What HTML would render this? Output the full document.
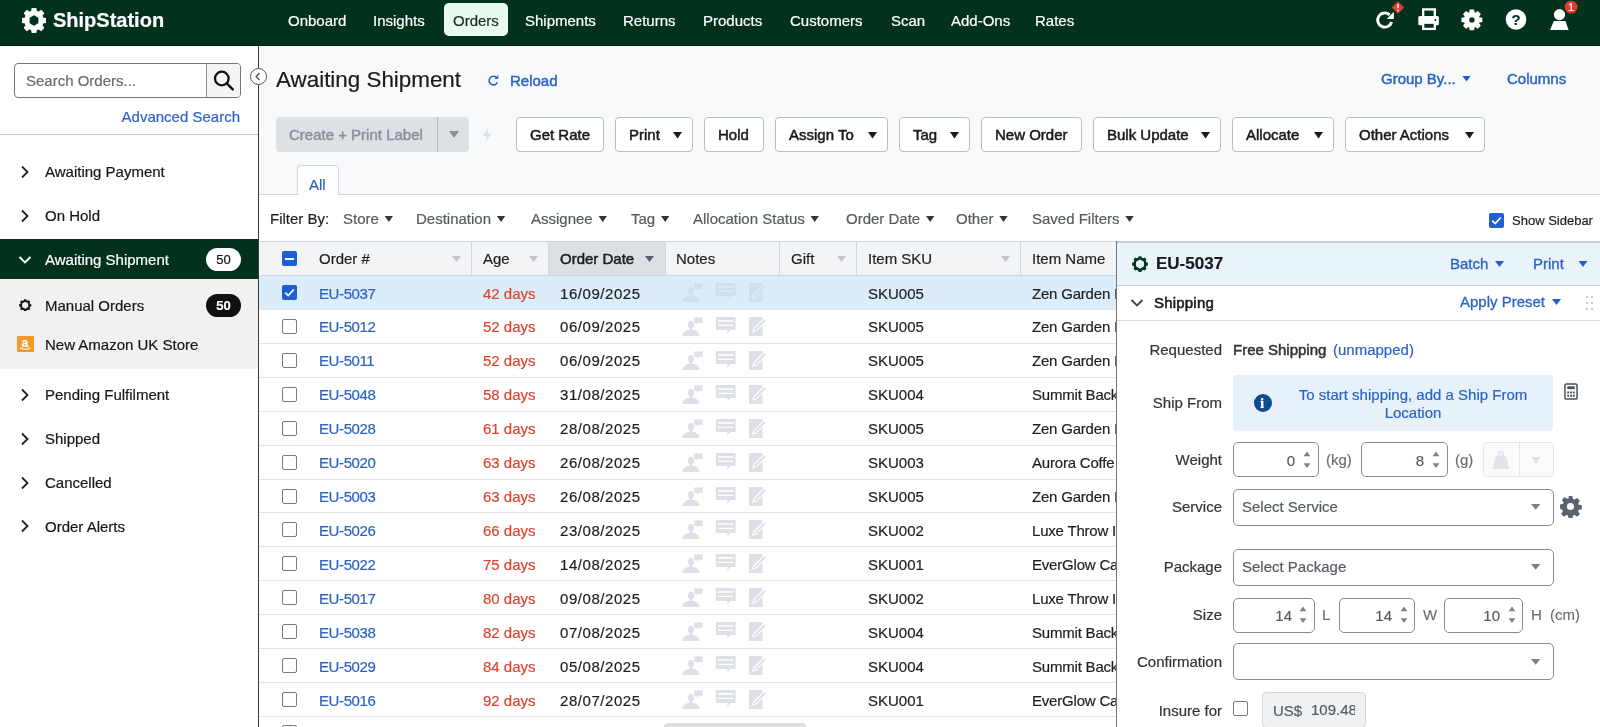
<!DOCTYPE html>
<html><head><meta charset="utf-8">
<style>
*{box-sizing:border-box;margin:0;padding:0}
html,body{width:1600px;height:727px;overflow:hidden;background:#f8f9fb;font-family:"Liberation Sans",sans-serif;color:#1a1a1a}
.abs{position:absolute}
.t{position:absolute;white-space:nowrap;line-height:1}
/* NAV */
#nav{z-index:5;position:absolute;left:0;top:0;width:1600px;height:46px;background:#02311d;border-bottom:1px solid #011a0e}
#nav .ni{position:absolute;top:11.500px;color:#fff;font-size:15px;white-space:nowrap;line-height:18px}
#nav .act{position:absolute;left:444px;top:3px;width:64px;height:33px;background:#e7faee;border-radius:5px}
/* SIDEBAR */
#side{position:absolute;left:0;top:45px;width:259px;height:682px;background:#fff;border-right:1px solid #3a3a3a}
.si{position:absolute;left:45px;font-size:15px;color:#171717;white-space:nowrap;line-height:18px}
.chev{position:absolute;left:19px;width:12px;height:14px}
/* MAIN */
.btn{-webkit-text-stroke:0.500px #1a1a1a;position:absolute;top:117px;height:35px;border:1px solid #b9bfc7;border-radius:4px;background:#fff;font-size:15px;font-weight:normal;color:#1a1a1a;line-height:34px;white-space:nowrap;padding-left:13px}
.btn i{position:absolute;right:10px;top:14px;width:9px;height:6.5px;background:#1a1a1a;clip-path:polygon(0 0,100% 0,50% 100%)}
.flt{position:absolute;top:210px;font-size:15px;color:#555b63;white-space:nowrap;line-height:18px}
.flt i{display:inline-block;margin-left:5.500px;vertical-align:2px;width:9px;height:6.5px;background:#30363e;clip-path:polygon(0 0,100% 0,50% 100%)}
.gh{font-size:15px;line-height:18px;color:#1f1f1f}
.gc{font-size:15px;line-height:18px;color:#1f1f1f}
.pb{-webkit-text-stroke:0.300px #2c63c4;font-size:15px;line-height:18px;color:#2c63c4}
.pl{margin-right:-1px;font-size:15px;line-height:18px;color:#333}
.pu{font-size:15px;line-height:18px;color:#6a7078}
.pv{font-size:15px;line-height:18px;color:#555b63}
.ps{font-size:15px;line-height:18px;color:#555b63}
.inp{position:absolute;border:1px solid #868c94;border-radius:5px;background:#fff}
.gd{letter-spacing:0.550px}
.go{letter-spacing:-0.400px}
.gn{letter-spacing:-0.200px}
body{will-change:transform;-webkit-text-stroke-width:0.200px}
</style></head><body>
<div id="nav">
  <div class="act"></div>
  <div class="ni" style="left:288px">Onboard</div>
  <div class="ni" style="left:373px">Insights</div>
  <div class="ni" style="left:453px;color:#1f2a25">Orders</div>
  <div class="ni" style="left:525px">Shipments</div>
  <div class="ni" style="left:623px">Returns</div>
  <div class="ni" style="left:703px">Products</div>
  <div class="ni" style="left:790px">Customers</div>
  <div class="ni" style="left:891px">Scan</div>
  <div class="ni" style="left:951px">Add-Ons</div>
  <div class="ni" style="left:1035px">Rates</div>
  <svg class="abs" style="left:1370px;top:0" width="230" height="45" viewBox="1370 0 230 45">
    <path d="M1391.600 22 A7.100 7.100 0 1 1 1389.700 14.900" fill="none" stroke="#fff" stroke-width="2.900"/>
    <path d="M1393.900 11.800 L1393.900 18.900 L1386.800 18.900 Z" fill="#fff"/>
    <path d="M1398 1.300 L1404.200 7.500 L1398 13.700 L1391.800 7.500 Z" fill="#e63b2e"/>
    <path d="M1398 4 L1398 8.300 M1398 9.800 L1398 11.200" stroke="#fff" stroke-width="1.500"/>
    <rect x="1423.200" y="9.400" width="11.600" height="8" fill="none" stroke="#fff" stroke-width="2.300"/>
    <rect x="1418.300" y="16" width="20.600" height="9.200" rx="1.500" fill="#fff"/>
    <rect x="1423.200" y="22.700" width="11.600" height="6.200" fill="#02311d" stroke="#fff" stroke-width="2.300"/>
    <circle cx="1435.300" cy="20" r="1" fill="#02311d"/>
    <g transform="translate(1471.900 19.900)"><path d="M7.11 -2.06 L9.84 -1.80 L9.84 1.80 L7.11 2.06 L6.48 3.56 L8.23 5.69 L5.69 8.23 L3.56 6.48 L2.06 7.11 L1.80 9.84 L-1.80 9.84 L-2.06 7.11 L-3.56 6.48 L-5.69 8.23 L-8.23 5.69 L-6.48 3.56 L-7.11 2.06 L-9.84 1.80 L-9.84 -1.80 L-7.11 -2.06 L-6.48 -3.56 L-8.23 -5.69 L-5.69 -8.23 L-3.56 -6.48 L-2.06 -7.11 L-1.80 -9.84 L1.80 -9.84 L2.06 -7.11 L3.56 -6.48 L5.69 -8.23 L8.23 -5.69 L6.48 -3.56Z" fill="#fff" stroke="#fff" stroke-width="1.200" stroke-linejoin="round"/><circle r="2.700" fill="#02311d"/></g>
    <circle cx="1516" cy="19.500" r="10.300" fill="#fff"/>
    <circle cx="1559.500" cy="14.600" r="5.600" fill="#fff"/>
    <path d="M1553.800 21 L1565.500 21 L1568.600 30 L1550 30 Z" fill="#fff"/>
    <circle cx="1571.100" cy="7.100" r="6.400" fill="#e63b2e"/>
  </svg>
  <div class="t" style="left:1511.500px;top:11px;font-size:15px;font-weight:bold;color:#02311d;line-height:18px">?</div>
  <div class="t" style="left:1568px;top:1px;font-size:11px;color:#fff;line-height:12px">1</div>

  <svg class="abs" style="left:22px;top:7.500px" width="24" height="25" viewBox="0 0 24 24" preserveAspectRatio="none"><path fill="#fff" fill-rule="evenodd" stroke="#fff" stroke-width="1" stroke-linejoin="round" d="M20.89 9.64 L23.85 10.12 L23.85 13.88 L20.89 14.36 L19.96 16.62 L21.71 19.05 L19.05 21.71 L16.62 19.96 L14.36 20.89 L13.88 23.85 L10.12 23.85 L9.64 20.89 L7.38 19.96 L4.95 21.71 L2.29 19.05 L4.04 16.62 L3.11 14.36 L0.15 13.88 L0.15 10.12 L3.11 9.64 L4.04 7.38 L2.29 4.95 L4.95 2.29 L7.38 4.04 L9.64 3.11 L10.12 0.15 L13.88 0.15 L14.36 3.11 L16.62 4.04 L19.05 2.29 L21.71 4.95 L19.96 7.38ZM16.94 14.85 L12.00 17.70 L7.06 14.85 L7.06 9.15 L12.00 6.30 L16.94 9.15Z"/></svg>
  <div class="t" id="brand" style="left:53px;top:8px;font-size:20px;font-weight:bold;color:#fff;line-height:24px">ShipStation</div>
</div>
<div id="side">
  <div class="abs" style="left:14px;top:18px;width:227px;height:35px;border:1px solid #6f757d;border-radius:4px;background:#fff;overflow:hidden">
    <div class="t" style="left:11px;top:8px;font-size:15px;color:#666b72;line-height:18px">Search Orders...</div>
    <div class="abs" style="left:191px;top:0;width:35px;height:33px;background:#f3f4f6;border-left:1px solid #8b9097"></div>
    <svg class="abs" style="left:197px;top:4.500px" width="24" height="24" viewBox="0 0 24 24"><circle cx="9.800" cy="9.500" r="6.800" fill="none" stroke="#111" stroke-width="2.300"/><path d="M14.700 14.400 L20.800 20.300" stroke="#111" stroke-width="2.500" stroke-linecap="round"/></svg>
  </div>
  <div class="t" style="right:18px;top:63px;font-size:15px;color:#2c63c4;line-height:18px">Advanced Search</div>
  <div class="abs" style="left:0;top:89px;width:258px;height:1px;background:#c5c9cf"></div>

  <svg class="chev" style="top:120px" viewBox="0 0 12 14"><path d="M3 1.5 L8.5 7 L3 12.5" fill="none" stroke="#222" stroke-width="1.8"/></svg>
  <div class="si" style="top:118px">Awaiting Payment</div>
  <svg class="chev" style="top:164px" viewBox="0 0 12 14"><path d="M3 1.5 L8.5 7 L3 12.5" fill="none" stroke="#222" stroke-width="1.8"/></svg>
  <div class="si" style="top:162px">On Hold</div>

  <div class="abs" style="left:0;top:194px;width:258px;height:40px;background:#02311d"></div>
  <svg class="abs" style="left:18px;top:209px" width="14" height="12" viewBox="0 0 14 12"><path d="M1.5 3 L7 8.5 L12.5 3" fill="none" stroke="#fff" stroke-width="1.8"/></svg>
  <div class="si" style="top:206px;color:#fff">Awaiting Shipment</div>
  <div class="abs" style="left:206px;top:203px;width:35px;height:23px;border-radius:12px;background:#fff;color:#1a1a1a;font-size:13px;line-height:23px;text-align:center">50</div>

  <div class="abs" style="left:0;top:234px;width:258px;height:90px;background:#f0f1f3"></div>
  <svg class="abs" style="left:19.200px;top:253.700px" width="12.400" height="12.600" viewBox="0 0 24 24"><path fill="#141a17" fill-rule="evenodd" d="M21.62 9.29 L23.84 10.03 L23.84 13.97 L21.62 14.71 L20.72 16.89 L21.76 18.98 L18.98 21.76 L16.89 20.72 L14.71 21.62 L13.97 23.84 L10.03 23.84 L9.29 21.62 L7.11 20.72 L5.02 21.76 L2.24 18.98 L3.28 16.89 L2.38 14.71 L0.16 13.97 L0.16 10.03 L2.38 9.29 L3.28 7.11 L2.24 5.02 L5.02 2.24 L7.11 3.28 L9.29 2.38 L10.03 0.16 L13.97 0.16 L14.71 2.38 L16.89 3.28 L18.98 2.24 L21.76 5.02 L20.72 7.11ZM17.89 15.40 L12.00 18.80 L6.11 15.40 L6.11 8.60 L12.00 5.20 L17.89 8.60Z"/></svg>
  <div class="si" style="top:252px">Manual Orders</div>
  <div class="abs" style="left:206px;top:249px;width:35px;height:23px;border-radius:12px;background:#111;color:#fff;font-size:13px;font-weight:bold;line-height:23px;text-align:center">50</div>
  <div class="abs" style="left:17px;top:291px;width:16.500px;height:16px;background:#f3982a;border-radius:1px"></div>
  <div class="t" style="left:21.500px;top:290.500px;font-size:12px;font-weight:bold;color:#fff;line-height:14px">a</div>
  <svg class="abs" style="left:19px;top:302px" width="13" height="4" viewBox="0 0 13 4"><path d="M1 0.800 Q6 3.800 11.500 0.800" fill="none" stroke="#fff" stroke-width="1.100"/></svg>
  <div class="si" style="top:291px">New Amazon UK Store</div>

  <svg class="chev" style="top:343px" viewBox="0 0 12 14"><path d="M3 1.5 L8.5 7 L3 12.5" fill="none" stroke="#222" stroke-width="1.8"/></svg>
  <div class="si" style="top:341px">Pending Fulfilment</div>
  <svg class="chev" style="top:387px" viewBox="0 0 12 14"><path d="M3 1.5 L8.5 7 L3 12.5" fill="none" stroke="#222" stroke-width="1.8"/></svg>
  <div class="si" style="top:385px">Shipped</div>
  <svg class="chev" style="top:431px" viewBox="0 0 12 14"><path d="M3 1.5 L8.5 7 L3 12.5" fill="none" stroke="#222" stroke-width="1.8"/></svg>
  <div class="si" style="top:429px">Cancelled</div>
  <svg class="chev" style="top:474px" viewBox="0 0 12 14"><path d="M3 1.5 L8.5 7 L3 12.5" fill="none" stroke="#222" stroke-width="1.8"/></svg>
  <div class="si" style="top:473px">Order Alerts</div>
</div>
<div id="main">
  <!-- collapse circle -->
  <div class="abs" style="left:249.500px;top:68px;width:17px;height:17px;border-radius:50%;background:#fff;border:1px solid #555"></div>
  <svg class="abs" style="left:254px;top:72px" width="8" height="9" viewBox="0 0 8 9"><path d="M5.5 1 L2 4.500 L5.500 8" fill="none" stroke="#444" stroke-width="1.100"/></svg>
  <div class="t" id="title" style="left:276px;top:67px;font-size:22.400px;color:#1a1a1a;line-height:26px">Awaiting Shipment</div>
  <svg class="abs" style="left:487px;top:74px" width="13" height="13" viewBox="0 0 13 13"><path d="M10.400 8.200 A4.300 4.300 0 1 1 9.300 3.400" fill="none" stroke="#2c63c4" stroke-width="1.600"/><path d="M11.300 1 L11.300 5 L7.300 5 Z" fill="#2c63c4"/></svg>
  <div class="t" style="left:510px;top:72px;font-size:15px;color:#2c63c4;line-height:18px;-webkit-text-stroke:0.450px #2c63c4">Reload</div>
  <div class="t" style="left:1381px;top:70px;font-size:15px;color:#2c63c4;line-height:18px;-webkit-text-stroke:0.450px #2c63c4">Group By...</div>
  <div class="abs" style="left:1462px;top:75.500px;width:9px;height:6px;background:#1f5fd0;clip-path:polygon(0 0,100% 0,50% 100%)"></div>
  <div class="t" style="left:1507px;top:70px;font-size:15px;color:#2c63c4;line-height:18px;-webkit-text-stroke:0.450px #2c63c4">Columns</div>

  <!-- toolbar -->
  <div class="abs" style="left:276px;top:117px;width:193px;height:35px;border-radius:4px;background:#dde1e6"></div>
  <div class="abs" style="left:437px;top:117px;width:1px;height:35px;background:#b4b9c0"></div>
  <div class="t" style="left:289px;top:126px;font-size:15px;color:#8b9097;line-height:18px;-webkit-text-stroke:0.450px #8b9097">Create + Print Label</div>
  <div class="abs" style="left:449px;top:131px;width:10px;height:7px;background:#8b9097;clip-path:polygon(0 0,100% 0,50% 100%)"></div>
  <svg class="abs" style="left:482px;top:128px" width="10" height="14" viewBox="0 0 10 14"><path d="M6 0 L1 8 L4.500 8 L3.500 14 L9 5.500 L5.500 5.500 Z" fill="#dcdfe3"/></svg>

  <div class="btn" style="left:516px;width:88px">Get Rate</div>
  <div class="btn" style="left:615px;width:78px">Print<i></i></div>
  <div class="btn" style="left:704px;width:60px">Hold</div>
  <div class="btn" style="left:775px;width:113px">Assign To<i></i></div>
  <div class="btn" style="left:899px;width:71px">Tag<i></i></div>
  <div class="btn" style="left:981px;width:101px">New Order</div>
  <div class="btn" style="left:1093px;width:128px">Bulk Update<i></i></div>
  <div class="btn" style="left:1232px;width:102px">Allocate<i></i></div>
  <div class="btn" style="left:1345px;width:140px">Other Actions<i></i></div>

  <!-- tabs -->
  <div class="abs" style="left:259px;top:195px;width:1341px;height:46px;background:#fff"></div>
  <div class="abs" style="left:259px;top:194px;width:1341px;height:1px;background:#cfd6df"></div>
  <div class="abs" style="left:297px;top:165px;width:42px;height:30px;background:#fff;border:1px solid #cfd6df;border-bottom:none;border-radius:4px 4px 0 0"></div>
  <div class="t" style="left:309px;top:176px;font-size:15px;color:#2c63c4;line-height:18px">All</div>

  <!-- filter bar -->
  <div class="flt" style="left:270px;color:#1f1f1f">Filter By:</div>
  <div class="flt" style="left:343px">Store<i></i></div>
  <div class="flt" style="left:416px">Destination<i></i></div>
  <div class="flt" style="left:531px">Assignee<i></i></div>
  <div class="flt" style="left:631px">Tag<i></i></div>
  <div class="flt" style="left:693px">Allocation Status<i></i></div>
  <div class="flt" style="left:846px">Order Date<i></i></div>
  <div class="flt" style="left:956px">Other<i></i></div>
  <div class="flt" style="left:1032px">Saved Filters<i></i></div>
  <div class="abs" style="left:1489px;top:213px;width:15px;height:15px;border-radius:2px;background:#1f5fd0"></div>
  <svg class="abs" style="left:1489px;top:213px" width="15" height="15" viewBox="0 0 15 15"><path d="M3.200 7.600 L6.200 10.500 L11.800 4.500" fill="none" stroke="#fff" stroke-width="1.700"/></svg>
  <div class="t" style="left:1512px;top:213px;font-size:13px;color:#1f1f1f;line-height:16px">Show Sidebar</div>
  <div id="grid">
<div class="abs" style="left:259px;top:241px;width:858px;height:35px;background:#f3f4f6;border-top:1px solid #cfd4da;border-bottom:1px solid #cfd4da"></div>
<div class="abs" style="left:548px;top:242px;width:117px;height:33px;background:#dcdfe4"></div>
<div class="abs" style="left:471px;top:242px;width:1px;height:33px;background:#d3d7dc"></div>
<div class="abs" style="left:548px;top:242px;width:1px;height:33px;background:#d3d7dc"></div>
<div class="abs" style="left:665px;top:242px;width:1px;height:33px;background:#d3d7dc"></div>
<div class="abs" style="left:779px;top:242px;width:1px;height:33px;background:#d3d7dc"></div>
<div class="abs" style="left:856px;top:242px;width:1px;height:33px;background:#d3d7dc"></div>
<div class="abs" style="left:1020px;top:242px;width:1px;height:33px;background:#d3d7dc"></div>
<div class="t gh" style="left:319px;top:250px">Order #</div>
<div class="t gh" style="left:483px;top:250px">Age</div>
<div class="t gh" style="left:560px;top:250px;-webkit-text-stroke:0.500px #1f1f1f">Order Date</div>
<div class="t gh" style="left:676px;top:250px">Notes</div>
<div class="t gh" style="left:791px;top:250px">Gift</div>
<div class="t gh" style="left:868px;top:250px">Item SKU</div>
<div class="t gh" style="left:1032px;top:250px">Item Name</div>
<div class="abs" style="left:452px;top:256px;width:9px;height:6px;background:#c3c7cd;clip-path:polygon(0 0,100% 0,50% 100%)"></div>
<div class="abs" style="left:529px;top:256px;width:9px;height:6px;background:#c3c7cd;clip-path:polygon(0 0,100% 0,50% 100%)"></div>
<div class="abs" style="left:645px;top:256px;width:9px;height:6px;background:#5a6068;clip-path:polygon(0 0,100% 0,50% 100%)"></div>
<div class="abs" style="left:837px;top:256px;width:9px;height:6px;background:#c3c7cd;clip-path:polygon(0 0,100% 0,50% 100%)"></div>
<div class="abs" style="left:1001px;top:256px;width:9px;height:6px;background:#c3c7cd;clip-path:polygon(0 0,100% 0,50% 100%)"></div>
<div class="abs" style="left:282px;top:251px;width:15px;height:15px;border-radius:2px;background:#1f5fd0"></div><div class="abs" style="left:285px;top:258px;width:9px;height:2px;background:#fff"></div>
<div class="abs" style="left:259px;top:276.00px;width:858px;height:33.92px;background:#dbedfb;border-bottom:1px solid #e1e4e8"></div>
<div class="abs" style="left:282px;top:285.00px;width:15px;height:15px;border-radius:2px;background:#1f5fd0"></div><svg class="abs" style="left:282px;top:285.00px" width="15" height="15" viewBox="0 0 15 15"><path d="M3.200 7.600 L6.200 10.500 L11.800 4.500" fill="none" stroke="#fff" stroke-width="1.700"/></svg>
<div class="t gc go" style="left:319px;top:284.50px;color:#2c63c4">EU-5037</div>
<div class="t gc" style="left:483px;top:284.50px;color:#e0452f">42 days</div>
<div class="t gc gd" style="left:560px;top:284.50px">16/09/2025</div>
<svg class="abs nic" style="left:680px;top:282.00px" width="90" height="22" viewBox="0 0 90 22">
<path fill="#cfdfee" d="M10.500 4.800a3.600 3.900 0 0 1 3.600 3.900c0 1.700-.9 3.100-2.100 3.700l.3 1.400c3.800.4 7 1.900 7.200 6.200h-17c.2-4.300 3.400-5.800 7.200-6.200l.3-1.400c-1.200-.6-2.100-2-2.100-3.700a3.600 3.900 0 0 1 2.600-3.900z"/><path fill="#cfdfee" stroke="#dbedfb" stroke-width="0.800" d="M13.800 1h9.200v6.300h-4.600l-2 2v-2h-2.600z"/>
<path fill="#cfdfee" d="M35.800 1h19.800v13h-5l-3.600 3.600.6-3.600h-11.800z"/><path stroke="#dbedfb" stroke-width="1.400" d="M38 5h15.400M38 9.400h15.400"/>
<path fill="#cfdfee" d="M69 1h13.500v19h-13.500z"/><path fill="#dbedfb" d="M84.300 1.500l3 3-11 11-4.200 1.300 1.200-4.300z"/><path fill="#cfdfee" d="M84.300 3.300l1.400 1.400-9.900 9.900-2.100.7.700-2.100z"/>
</svg>
<div class="t gc" style="left:868px;top:284.50px">SKU005</div>
<div class="t gc gn" style="left:1032px;top:284.50px">Zen Garden I</div>
<div class="abs" style="left:259px;top:309.92px;width:858px;height:33.92px;background:#fff;border-bottom:1px solid #e1e4e8"></div>
<div class="abs" style="left:282px;top:318.92px;width:15px;height:15px;border-radius:2px;background:#fff;border:1px solid #767b82"></div>
<div class="t gc go" style="left:319px;top:318.42px;color:#2c63c4">EU-5012</div>
<div class="t gc" style="left:483px;top:318.42px;color:#e0452f">52 days</div>
<div class="t gc gd" style="left:560px;top:318.42px">06/09/2025</div>
<svg class="abs nic" style="left:680px;top:315.92px" width="90" height="22" viewBox="0 0 90 22">
<path fill="#dde1e7" d="M10.500 4.800a3.600 3.900 0 0 1 3.600 3.900c0 1.700-.9 3.100-2.100 3.700l.3 1.400c3.800.4 7 1.900 7.200 6.200h-17c.2-4.300 3.400-5.800 7.200-6.200l.3-1.400c-1.200-.6-2.100-2-2.100-3.700a3.600 3.900 0 0 1 2.600-3.900z"/><path fill="#dde1e7" stroke="#fff" stroke-width="0.800" d="M13.800 1h9.200v6.300h-4.600l-2 2v-2h-2.600z"/>
<path fill="#dde1e7" d="M35.800 1h19.800v13h-5l-3.600 3.600.6-3.600h-11.800z"/><path stroke="#fff" stroke-width="1.400" d="M38 5h15.400M38 9.400h15.400"/>
<path fill="#dde1e7" d="M69 1h13.500v19h-13.500z"/><path fill="#fff" d="M84.300 1.500l3 3-11 11-4.200 1.300 1.200-4.300z"/><path fill="#dde1e7" d="M84.300 3.300l1.400 1.400-9.900 9.900-2.100.7.700-2.100z"/>
</svg>
<div class="t gc" style="left:868px;top:318.42px">SKU005</div>
<div class="t gc gn" style="left:1032px;top:318.42px">Zen Garden I</div>
<div class="abs" style="left:259px;top:343.84px;width:858px;height:33.92px;background:#fff;border-bottom:1px solid #e1e4e8"></div>
<div class="abs" style="left:282px;top:352.84px;width:15px;height:15px;border-radius:2px;background:#fff;border:1px solid #767b82"></div>
<div class="t gc go" style="left:319px;top:352.34px;color:#2c63c4">EU-5011</div>
<div class="t gc" style="left:483px;top:352.34px;color:#e0452f">52 days</div>
<div class="t gc gd" style="left:560px;top:352.34px">06/09/2025</div>
<svg class="abs nic" style="left:680px;top:349.84px" width="90" height="22" viewBox="0 0 90 22">
<path fill="#dde1e7" d="M10.500 4.800a3.600 3.900 0 0 1 3.600 3.900c0 1.700-.9 3.100-2.100 3.700l.3 1.400c3.800.4 7 1.900 7.200 6.200h-17c.2-4.300 3.400-5.800 7.200-6.200l.3-1.400c-1.200-.6-2.100-2-2.100-3.700a3.600 3.900 0 0 1 2.600-3.900z"/><path fill="#dde1e7" stroke="#fff" stroke-width="0.800" d="M13.800 1h9.200v6.300h-4.600l-2 2v-2h-2.600z"/>
<path fill="#dde1e7" d="M35.800 1h19.800v13h-5l-3.600 3.600.6-3.600h-11.800z"/><path stroke="#fff" stroke-width="1.400" d="M38 5h15.400M38 9.400h15.400"/>
<path fill="#dde1e7" d="M69 1h13.500v19h-13.500z"/><path fill="#fff" d="M84.300 1.500l3 3-11 11-4.200 1.300 1.200-4.300z"/><path fill="#dde1e7" d="M84.300 3.300l1.400 1.400-9.900 9.900-2.100.7.700-2.100z"/>
</svg>
<div class="t gc" style="left:868px;top:352.34px">SKU005</div>
<div class="t gc gn" style="left:1032px;top:352.34px">Zen Garden I</div>
<div class="abs" style="left:259px;top:377.76px;width:858px;height:33.92px;background:#fff;border-bottom:1px solid #e1e4e8"></div>
<div class="abs" style="left:282px;top:386.76px;width:15px;height:15px;border-radius:2px;background:#fff;border:1px solid #767b82"></div>
<div class="t gc go" style="left:319px;top:386.26px;color:#2c63c4">EU-5048</div>
<div class="t gc" style="left:483px;top:386.26px;color:#e0452f">58 days</div>
<div class="t gc gd" style="left:560px;top:386.26px">31/08/2025</div>
<svg class="abs nic" style="left:680px;top:383.76px" width="90" height="22" viewBox="0 0 90 22">
<path fill="#dde1e7" d="M10.500 4.800a3.600 3.900 0 0 1 3.600 3.900c0 1.700-.9 3.100-2.100 3.700l.3 1.400c3.800.4 7 1.900 7.200 6.200h-17c.2-4.300 3.400-5.800 7.200-6.200l.3-1.400c-1.200-.6-2.100-2-2.100-3.700a3.600 3.900 0 0 1 2.600-3.900z"/><path fill="#dde1e7" stroke="#fff" stroke-width="0.800" d="M13.800 1h9.200v6.300h-4.600l-2 2v-2h-2.600z"/>
<path fill="#dde1e7" d="M35.800 1h19.800v13h-5l-3.600 3.600.6-3.600h-11.800z"/><path stroke="#fff" stroke-width="1.400" d="M38 5h15.400M38 9.400h15.400"/>
<path fill="#dde1e7" d="M69 1h13.500v19h-13.500z"/><path fill="#fff" d="M84.300 1.500l3 3-11 11-4.200 1.300 1.200-4.300z"/><path fill="#dde1e7" d="M84.300 3.300l1.400 1.400-9.900 9.900-2.100.7.700-2.100z"/>
</svg>
<div class="t gc" style="left:868px;top:386.26px">SKU004</div>
<div class="t gc gn" style="left:1032px;top:386.26px">Summit Back</div>
<div class="abs" style="left:259px;top:411.68px;width:858px;height:33.92px;background:#fff;border-bottom:1px solid #e1e4e8"></div>
<div class="abs" style="left:282px;top:420.68px;width:15px;height:15px;border-radius:2px;background:#fff;border:1px solid #767b82"></div>
<div class="t gc go" style="left:319px;top:420.18px;color:#2c63c4">EU-5028</div>
<div class="t gc" style="left:483px;top:420.18px;color:#e0452f">61 days</div>
<div class="t gc gd" style="left:560px;top:420.18px">28/08/2025</div>
<svg class="abs nic" style="left:680px;top:417.68px" width="90" height="22" viewBox="0 0 90 22">
<path fill="#dde1e7" d="M10.500 4.800a3.600 3.900 0 0 1 3.600 3.900c0 1.700-.9 3.100-2.100 3.700l.3 1.400c3.800.4 7 1.900 7.200 6.200h-17c.2-4.300 3.400-5.800 7.200-6.200l.3-1.400c-1.200-.6-2.100-2-2.100-3.700a3.600 3.900 0 0 1 2.600-3.900z"/><path fill="#dde1e7" stroke="#fff" stroke-width="0.800" d="M13.800 1h9.200v6.300h-4.600l-2 2v-2h-2.600z"/>
<path fill="#dde1e7" d="M35.800 1h19.800v13h-5l-3.600 3.600.6-3.600h-11.800z"/><path stroke="#fff" stroke-width="1.400" d="M38 5h15.400M38 9.400h15.400"/>
<path fill="#dde1e7" d="M69 1h13.500v19h-13.500z"/><path fill="#fff" d="M84.300 1.500l3 3-11 11-4.200 1.300 1.200-4.300z"/><path fill="#dde1e7" d="M84.300 3.300l1.400 1.400-9.900 9.900-2.100.7.700-2.100z"/>
</svg>
<div class="t gc" style="left:868px;top:420.18px">SKU005</div>
<div class="t gc gn" style="left:1032px;top:420.18px">Zen Garden I</div>
<div class="abs" style="left:259px;top:445.60px;width:858px;height:33.92px;background:#fff;border-bottom:1px solid #e1e4e8"></div>
<div class="abs" style="left:282px;top:454.60px;width:15px;height:15px;border-radius:2px;background:#fff;border:1px solid #767b82"></div>
<div class="t gc go" style="left:319px;top:454.10px;color:#2c63c4">EU-5020</div>
<div class="t gc" style="left:483px;top:454.10px;color:#e0452f">63 days</div>
<div class="t gc gd" style="left:560px;top:454.10px">26/08/2025</div>
<svg class="abs nic" style="left:680px;top:451.60px" width="90" height="22" viewBox="0 0 90 22">
<path fill="#dde1e7" d="M10.500 4.800a3.600 3.900 0 0 1 3.600 3.900c0 1.700-.9 3.100-2.100 3.700l.3 1.400c3.800.4 7 1.900 7.200 6.200h-17c.2-4.300 3.400-5.800 7.200-6.200l.3-1.400c-1.200-.6-2.100-2-2.100-3.700a3.600 3.900 0 0 1 2.600-3.900z"/><path fill="#dde1e7" stroke="#fff" stroke-width="0.800" d="M13.800 1h9.200v6.300h-4.600l-2 2v-2h-2.600z"/>
<path fill="#dde1e7" d="M35.800 1h19.800v13h-5l-3.600 3.600.6-3.600h-11.800z"/><path stroke="#fff" stroke-width="1.400" d="M38 5h15.400M38 9.400h15.400"/>
<path fill="#dde1e7" d="M69 1h13.500v19h-13.500z"/><path fill="#fff" d="M84.300 1.500l3 3-11 11-4.200 1.300 1.200-4.300z"/><path fill="#dde1e7" d="M84.300 3.300l1.400 1.400-9.900 9.900-2.100.7.700-2.100z"/>
</svg>
<div class="t gc" style="left:868px;top:454.10px">SKU003</div>
<div class="t gc gn" style="left:1032px;top:454.10px">Aurora Coffe</div>
<div class="abs" style="left:259px;top:479.52px;width:858px;height:33.92px;background:#fff;border-bottom:1px solid #e1e4e8"></div>
<div class="abs" style="left:282px;top:488.52px;width:15px;height:15px;border-radius:2px;background:#fff;border:1px solid #767b82"></div>
<div class="t gc go" style="left:319px;top:488.02px;color:#2c63c4">EU-5003</div>
<div class="t gc" style="left:483px;top:488.02px;color:#e0452f">63 days</div>
<div class="t gc gd" style="left:560px;top:488.02px">26/08/2025</div>
<svg class="abs nic" style="left:680px;top:485.52px" width="90" height="22" viewBox="0 0 90 22">
<path fill="#dde1e7" d="M10.500 4.800a3.600 3.900 0 0 1 3.600 3.900c0 1.700-.9 3.100-2.100 3.700l.3 1.400c3.800.4 7 1.900 7.200 6.200h-17c.2-4.300 3.400-5.800 7.200-6.200l.3-1.400c-1.200-.6-2.100-2-2.100-3.700a3.600 3.900 0 0 1 2.600-3.900z"/><path fill="#dde1e7" stroke="#fff" stroke-width="0.800" d="M13.800 1h9.200v6.300h-4.600l-2 2v-2h-2.600z"/>
<path fill="#dde1e7" d="M35.800 1h19.800v13h-5l-3.600 3.600.6-3.600h-11.800z"/><path stroke="#fff" stroke-width="1.400" d="M38 5h15.400M38 9.400h15.400"/>
<path fill="#dde1e7" d="M69 1h13.500v19h-13.500z"/><path fill="#fff" d="M84.300 1.500l3 3-11 11-4.200 1.300 1.200-4.300z"/><path fill="#dde1e7" d="M84.300 3.300l1.400 1.400-9.900 9.900-2.100.7.700-2.100z"/>
</svg>
<div class="t gc" style="left:868px;top:488.02px">SKU005</div>
<div class="t gc gn" style="left:1032px;top:488.02px">Zen Garden I</div>
<div class="abs" style="left:259px;top:513.44px;width:858px;height:33.92px;background:#fff;border-bottom:1px solid #e1e4e8"></div>
<div class="abs" style="left:282px;top:522.44px;width:15px;height:15px;border-radius:2px;background:#fff;border:1px solid #767b82"></div>
<div class="t gc go" style="left:319px;top:521.94px;color:#2c63c4">EU-5026</div>
<div class="t gc" style="left:483px;top:521.94px;color:#e0452f">66 days</div>
<div class="t gc gd" style="left:560px;top:521.94px">23/08/2025</div>
<svg class="abs nic" style="left:680px;top:519.44px" width="90" height="22" viewBox="0 0 90 22">
<path fill="#dde1e7" d="M10.500 4.800a3.600 3.900 0 0 1 3.600 3.900c0 1.700-.9 3.100-2.100 3.700l.3 1.400c3.800.4 7 1.900 7.200 6.200h-17c.2-4.300 3.400-5.800 7.200-6.200l.3-1.400c-1.200-.6-2.100-2-2.100-3.700a3.600 3.900 0 0 1 2.600-3.900z"/><path fill="#dde1e7" stroke="#fff" stroke-width="0.800" d="M13.800 1h9.200v6.300h-4.600l-2 2v-2h-2.600z"/>
<path fill="#dde1e7" d="M35.800 1h19.800v13h-5l-3.600 3.600.6-3.600h-11.800z"/><path stroke="#fff" stroke-width="1.400" d="M38 5h15.400M38 9.400h15.400"/>
<path fill="#dde1e7" d="M69 1h13.500v19h-13.500z"/><path fill="#fff" d="M84.300 1.500l3 3-11 11-4.200 1.300 1.200-4.300z"/><path fill="#dde1e7" d="M84.300 3.300l1.400 1.400-9.900 9.900-2.100.7.700-2.100z"/>
</svg>
<div class="t gc" style="left:868px;top:521.94px">SKU002</div>
<div class="t gc gn" style="left:1032px;top:521.94px">Luxe Throw I</div>
<div class="abs" style="left:259px;top:547.36px;width:858px;height:33.92px;background:#fff;border-bottom:1px solid #e1e4e8"></div>
<div class="abs" style="left:282px;top:556.36px;width:15px;height:15px;border-radius:2px;background:#fff;border:1px solid #767b82"></div>
<div class="t gc go" style="left:319px;top:555.86px;color:#2c63c4">EU-5022</div>
<div class="t gc" style="left:483px;top:555.86px;color:#e0452f">75 days</div>
<div class="t gc gd" style="left:560px;top:555.86px">14/08/2025</div>
<svg class="abs nic" style="left:680px;top:553.36px" width="90" height="22" viewBox="0 0 90 22">
<path fill="#dde1e7" d="M10.500 4.800a3.600 3.900 0 0 1 3.600 3.900c0 1.700-.9 3.100-2.100 3.700l.3 1.400c3.800.4 7 1.900 7.200 6.200h-17c.2-4.300 3.400-5.800 7.200-6.200l.3-1.400c-1.200-.6-2.100-2-2.100-3.700a3.600 3.900 0 0 1 2.600-3.900z"/><path fill="#dde1e7" stroke="#fff" stroke-width="0.800" d="M13.800 1h9.200v6.300h-4.600l-2 2v-2h-2.600z"/>
<path fill="#dde1e7" d="M35.800 1h19.800v13h-5l-3.600 3.600.6-3.600h-11.800z"/><path stroke="#fff" stroke-width="1.400" d="M38 5h15.400M38 9.400h15.400"/>
<path fill="#dde1e7" d="M69 1h13.500v19h-13.500z"/><path fill="#fff" d="M84.300 1.500l3 3-11 11-4.200 1.300 1.200-4.300z"/><path fill="#dde1e7" d="M84.300 3.300l1.400 1.400-9.900 9.900-2.100.7.700-2.100z"/>
</svg>
<div class="t gc" style="left:868px;top:555.86px">SKU001</div>
<div class="t gc gn" style="left:1032px;top:555.86px">EverGlow Ca</div>
<div class="abs" style="left:259px;top:581.28px;width:858px;height:33.92px;background:#fff;border-bottom:1px solid #e1e4e8"></div>
<div class="abs" style="left:282px;top:590.28px;width:15px;height:15px;border-radius:2px;background:#fff;border:1px solid #767b82"></div>
<div class="t gc go" style="left:319px;top:589.78px;color:#2c63c4">EU-5017</div>
<div class="t gc" style="left:483px;top:589.78px;color:#e0452f">80 days</div>
<div class="t gc gd" style="left:560px;top:589.78px">09/08/2025</div>
<svg class="abs nic" style="left:680px;top:587.28px" width="90" height="22" viewBox="0 0 90 22">
<path fill="#dde1e7" d="M10.500 4.800a3.600 3.900 0 0 1 3.600 3.900c0 1.700-.9 3.100-2.100 3.700l.3 1.400c3.800.4 7 1.900 7.200 6.200h-17c.2-4.300 3.400-5.800 7.200-6.200l.3-1.400c-1.200-.6-2.100-2-2.100-3.700a3.600 3.900 0 0 1 2.600-3.900z"/><path fill="#dde1e7" stroke="#fff" stroke-width="0.800" d="M13.800 1h9.200v6.300h-4.600l-2 2v-2h-2.600z"/>
<path fill="#dde1e7" d="M35.800 1h19.800v13h-5l-3.600 3.600.6-3.600h-11.800z"/><path stroke="#fff" stroke-width="1.400" d="M38 5h15.400M38 9.400h15.400"/>
<path fill="#dde1e7" d="M69 1h13.500v19h-13.500z"/><path fill="#fff" d="M84.300 1.500l3 3-11 11-4.200 1.300 1.200-4.300z"/><path fill="#dde1e7" d="M84.300 3.300l1.400 1.400-9.900 9.900-2.100.7.700-2.100z"/>
</svg>
<div class="t gc" style="left:868px;top:589.78px">SKU002</div>
<div class="t gc gn" style="left:1032px;top:589.78px">Luxe Throw I</div>
<div class="abs" style="left:259px;top:615.20px;width:858px;height:33.92px;background:#fff;border-bottom:1px solid #e1e4e8"></div>
<div class="abs" style="left:282px;top:624.20px;width:15px;height:15px;border-radius:2px;background:#fff;border:1px solid #767b82"></div>
<div class="t gc go" style="left:319px;top:623.70px;color:#2c63c4">EU-5038</div>
<div class="t gc" style="left:483px;top:623.70px;color:#e0452f">82 days</div>
<div class="t gc gd" style="left:560px;top:623.70px">07/08/2025</div>
<svg class="abs nic" style="left:680px;top:621.20px" width="90" height="22" viewBox="0 0 90 22">
<path fill="#dde1e7" d="M10.500 4.800a3.600 3.900 0 0 1 3.600 3.900c0 1.700-.9 3.100-2.100 3.700l.3 1.400c3.800.4 7 1.900 7.200 6.200h-17c.2-4.300 3.400-5.800 7.200-6.200l.3-1.400c-1.200-.6-2.100-2-2.100-3.700a3.600 3.900 0 0 1 2.600-3.900z"/><path fill="#dde1e7" stroke="#fff" stroke-width="0.800" d="M13.800 1h9.200v6.300h-4.600l-2 2v-2h-2.600z"/>
<path fill="#dde1e7" d="M35.800 1h19.800v13h-5l-3.600 3.600.6-3.600h-11.800z"/><path stroke="#fff" stroke-width="1.400" d="M38 5h15.400M38 9.400h15.400"/>
<path fill="#dde1e7" d="M69 1h13.500v19h-13.500z"/><path fill="#fff" d="M84.300 1.500l3 3-11 11-4.200 1.300 1.200-4.300z"/><path fill="#dde1e7" d="M84.300 3.300l1.400 1.400-9.900 9.900-2.100.7.700-2.100z"/>
</svg>
<div class="t gc" style="left:868px;top:623.70px">SKU004</div>
<div class="t gc gn" style="left:1032px;top:623.70px">Summit Back</div>
<div class="abs" style="left:259px;top:649.12px;width:858px;height:33.92px;background:#fff;border-bottom:1px solid #e1e4e8"></div>
<div class="abs" style="left:282px;top:658.12px;width:15px;height:15px;border-radius:2px;background:#fff;border:1px solid #767b82"></div>
<div class="t gc go" style="left:319px;top:657.62px;color:#2c63c4">EU-5029</div>
<div class="t gc" style="left:483px;top:657.62px;color:#e0452f">84 days</div>
<div class="t gc gd" style="left:560px;top:657.62px">05/08/2025</div>
<svg class="abs nic" style="left:680px;top:655.12px" width="90" height="22" viewBox="0 0 90 22">
<path fill="#dde1e7" d="M10.500 4.800a3.600 3.900 0 0 1 3.600 3.900c0 1.700-.9 3.100-2.100 3.700l.3 1.400c3.800.4 7 1.900 7.200 6.200h-17c.2-4.300 3.400-5.800 7.200-6.200l.3-1.400c-1.200-.6-2.100-2-2.100-3.700a3.600 3.900 0 0 1 2.600-3.900z"/><path fill="#dde1e7" stroke="#fff" stroke-width="0.800" d="M13.800 1h9.200v6.300h-4.600l-2 2v-2h-2.600z"/>
<path fill="#dde1e7" d="M35.800 1h19.800v13h-5l-3.600 3.600.6-3.600h-11.800z"/><path stroke="#fff" stroke-width="1.400" d="M38 5h15.400M38 9.400h15.400"/>
<path fill="#dde1e7" d="M69 1h13.500v19h-13.500z"/><path fill="#fff" d="M84.300 1.500l3 3-11 11-4.200 1.300 1.200-4.300z"/><path fill="#dde1e7" d="M84.300 3.300l1.400 1.400-9.900 9.900-2.100.7.700-2.100z"/>
</svg>
<div class="t gc" style="left:868px;top:657.62px">SKU004</div>
<div class="t gc gn" style="left:1032px;top:657.62px">Summit Back</div>
<div class="abs" style="left:259px;top:683.04px;width:858px;height:33.92px;background:#fff;border-bottom:1px solid #e1e4e8"></div>
<div class="abs" style="left:282px;top:692.04px;width:15px;height:15px;border-radius:2px;background:#fff;border:1px solid #767b82"></div>
<div class="t gc go" style="left:319px;top:691.54px;color:#2c63c4">EU-5016</div>
<div class="t gc" style="left:483px;top:691.54px;color:#e0452f">92 days</div>
<div class="t gc gd" style="left:560px;top:691.54px">28/07/2025</div>
<svg class="abs nic" style="left:680px;top:689.04px" width="90" height="22" viewBox="0 0 90 22">
<path fill="#dde1e7" d="M10.500 4.800a3.600 3.900 0 0 1 3.600 3.900c0 1.700-.9 3.100-2.100 3.700l.3 1.400c3.800.4 7 1.900 7.200 6.200h-17c.2-4.300 3.400-5.800 7.200-6.200l.3-1.400c-1.200-.6-2.100-2-2.100-3.700a3.600 3.900 0 0 1 2.600-3.900z"/><path fill="#dde1e7" stroke="#fff" stroke-width="0.800" d="M13.800 1h9.200v6.300h-4.600l-2 2v-2h-2.600z"/>
<path fill="#dde1e7" d="M35.800 1h19.800v13h-5l-3.600 3.600.6-3.600h-11.800z"/><path stroke="#fff" stroke-width="1.400" d="M38 5h15.400M38 9.400h15.400"/>
<path fill="#dde1e7" d="M69 1h13.500v19h-13.500z"/><path fill="#fff" d="M84.300 1.500l3 3-11 11-4.200 1.300 1.200-4.300z"/><path fill="#dde1e7" d="M84.300 3.300l1.400 1.400-9.900 9.900-2.100.7.700-2.100z"/>
</svg>
<div class="t gc" style="left:868px;top:691.54px">SKU001</div>
<div class="t gc gn" style="left:1032px;top:691.54px">EverGlow Ca</div>
<div class="abs" style="left:259px;top:716.960px;width:858px;height:11px;background:#fff"></div>
<div class="abs" style="left:282px;top:725px;width:15px;height:15px;border-radius:2px;background:#fff;border:1px solid #767b82"></div>
<div class="abs" style="left:664px;top:723px;width:142px;height:8px;border-radius:4px;background:#dedede"></div>
</div>
  <div id="panel">
<div class="abs" style="left:1116px;top:241px;width:484px;height:486px;background:#fff;border-left:1px solid #6f7781"></div>
<div class="abs" style="left:1117px;top:241px;width:483px;height:45px;background:#e9f3fa;border-top:2px solid #c3ccd4;border-bottom:1px solid #c3ccd4"></div>
<svg class="abs" style="left:1132px;top:255.800px" width="16" height="16.200" viewBox="0 0 24 24"><path fill="#0b3521" fill-rule="evenodd" d="M21.62 9.29 L23.84 10.03 L23.84 13.97 L21.62 14.71 L20.72 16.89 L21.76 18.98 L18.98 21.76 L16.89 20.72 L14.71 21.62 L13.97 23.84 L10.03 23.84 L9.29 21.62 L7.11 20.72 L5.02 21.76 L2.24 18.98 L3.28 16.89 L2.38 14.71 L0.16 13.97 L0.16 10.03 L2.38 9.29 L3.28 7.11 L2.24 5.02 L5.02 2.24 L7.11 3.28 L9.29 2.38 L10.03 0.16 L13.97 0.16 L14.71 2.38 L16.89 3.28 L18.98 2.24 L21.76 5.02 L20.72 7.11ZM17.89 15.40 L12.00 18.80 L6.11 15.40 L6.11 8.60 L12.00 5.20 L17.89 8.60Z"/></svg>
<div class="t" style="left:1156px;top:254px;font-size:17px;font-weight:bold;line-height:20px;color:#1a1a1a">EU-5037</div>
<div class="t pb" style="left:1450px;top:255px">Batch</div><div class="abs" style="left:1495px;top:261px;width:9px;height:6px;background:#1f5fd0;clip-path:polygon(0 0,100% 0,50% 100%)"></div>
<div class="t pb" style="left:1533px;top:255px">Print</div><div class="abs" style="left:1578.500px;top:261px;width:9px;height:6px;background:#1f5fd0;clip-path:polygon(0 0,100% 0,50% 100%)"></div>
<div class="abs" style="left:1117px;top:320px;width:483px;height:1px;background:#d5dae0"></div>
<svg class="abs" style="left:1130px;top:297px" width="14" height="12" viewBox="0 0 14 12"><path d="M1.500 3 L7 8.500 L12.500 3" fill="none" stroke="#444" stroke-width="1.800"/></svg>
<div class="t" style="left:1154px;top:294px;font-size:15px;line-height:18px;color:#1a1a1a;letter-spacing:0.200px;-webkit-text-stroke:0.550px #1a1a1a">Shipping</div>
<div class="t pb" style="left:1460px;top:293px">Apply Preset</div><div class="abs" style="left:1552px;top:299px;width:9px;height:6px;background:#1f5fd0;clip-path:polygon(0 0,100% 0,50% 100%)"></div>
<div class="abs" style="left:1586px;top:296px;width:2px;height:2px;background:#c9cdd2"></div><div class="abs" style="left:1591px;top:296px;width:2px;height:2px;background:#c9cdd2"></div>
<div class="abs" style="left:1586px;top:302px;width:2px;height:2px;background:#c9cdd2"></div><div class="abs" style="left:1591px;top:302px;width:2px;height:2px;background:#c9cdd2"></div>
<div class="abs" style="left:1586px;top:308px;width:2px;height:2px;background:#c9cdd2"></div><div class="abs" style="left:1591px;top:308px;width:2px;height:2px;background:#c9cdd2"></div>
<div class="t pl" style="right:379px;top:341px">Requested</div>
<div class="t" style="left:1233px;top:341px;font-size:15px;line-height:18px;color:#333;-webkit-text-stroke:0.500px #333">Free Shipping</div>
<div class="t" style="left:1333px;top:341px;font-size:15px;line-height:18px;color:#2c63c4">(unmapped)</div>
<div class="t pl" style="right:379px;top:394px">Ship From</div>
<div class="abs" style="left:1233px;top:375px;width:320px;height:56px;background:#e6f1fa;border-radius:4px"></div>
<div class="abs" style="left:1254px;top:394px;width:18px;height:18px;border-radius:50%;background:#0d4a8f"></div><div class="t" style="left:1260px;top:396px;font-family:'Liberation Serif',serif;font-weight:bold;font-size:15px;line-height:15px;color:#fff">i</div>
<div class="abs" style="left:1273px;top:386px;width:280px;text-align:center;font-size:15px;line-height:18px;color:#2c63c4">To start shipping, add a Ship From<br>Location</div>
<svg class="abs" style="left:1563.500px;top:382.500px" width="14" height="17" viewBox="0 0 15 18" preserveAspectRatio="none"><rect x="1" y="1" width="13" height="16" rx="1.500" fill="none" stroke="#4a5058" stroke-width="1.600"/><rect x="3.500" y="3.500" width="8" height="3" fill="#4a5058"/><path d="M3.500 9h2v2h-2zM6.500 9h2v2h-2zM9.500 9h2v2h-2zM3.500 12.500h2v2h-2zM6.500 12.500h2v2h-2zM9.500 12.500h2v2h-2z" fill="#4a5058"/></svg>
<div class="t pl" style="right:379px;top:451px">Weight</div>
<div class="inp" style="left:1233px;top:442px;width:86px;height:35px"></div><div class="t pv" style="right:305px;top:452px">0</div><svg class="abs" style="left:1303px;top:451px" width="8" height="18" viewBox="0 0 8 18"><path d="M4 0.600 L7.400 5.200 L0.600 5.200 Z M4 17 L7.400 12.200 L0.600 12.200 Z" fill="#7d838c"/></svg>
<div class="t pu" style="left:1326px;top:451px">(kg)</div>
<div class="inp" style="left:1361px;top:442px;width:87px;height:35px"></div><div class="t pv" style="right:176px;top:452px">8</div><svg class="abs" style="left:1432px;top:451px" width="8" height="18" viewBox="0 0 8 18"><path d="M4 0.600 L7.400 5.200 L0.600 5.200 Z M4 17 L7.400 12.200 L0.600 12.200 Z" fill="#7d838c"/></svg>
<div class="t pu" style="left:1455px;top:451px">(g)</div>
<div class="abs" style="left:1483px;top:442px;width:71px;height:35px;border:1px solid #e3e6ea;border-radius:4px;background:#fbfbfc"></div><div class="abs" style="left:1519px;top:443px;width:1px;height:33px;background:#e3e6ea"></div>
<svg class="abs" style="left:1490px;top:449px" width="22" height="22" viewBox="0 0 22 22"><path fill="#e0e3e7" d="M11 2a3.200 3.200 0 0 1 2.600 5h2.400l3.500 13h-17l3.500-13h2.400a3.200 3.200 0 0 1 2.600-5zm0 1.800a1.400 1.400 0 1 0 0 2.800 1.400 1.400 0 0 0 0-2.800z"/></svg><div class="abs" style="left:1531px;top:457px;width:10px;height:7px;background:#dfe2e6;clip-path:polygon(0 0,100% 0,50% 100%)"></div>
<div class="t pl" style="right:379px;top:498px">Service</div>
<div class="inp" style="left:1233px;top:489px;width:321px;height:37px"></div><div class="t ps" style="left:1242px;top:498px">Select Service</div><div class="abs" style="left:1531px;top:504px;width:9.4px;height:5.8px;background:#7a8088;clip-path:polygon(0 0,100% 0,50% 100%)"></div>
<svg class="abs" style="left:1559px;top:495px" width="23" height="23" viewBox="0 0 24 24"><path fill="#59626d" fill-rule="evenodd" d="M10 1h4l.6 3.100 1.700.7 2.600-1.800 2.900 2.900-1.800 2.600.7 1.700 3.100.6v4l-3.100.6-.7 1.700 1.800 2.600-2.900 2.900-2.600-1.800-1.700.7-.600 3.100h-4l-.6-3.100-1.700-.7-2.600 1.800-2.900-2.900 1.800-2.600-.7-1.700L1 14v-4l3.100-.6.700-1.700-1.800-2.600 2.900-2.900 2.600 1.800 1.700-.7zM12 8.300a3.700 3.700 0 1 0 0 7.400 3.700 3.700 0 0 0 0-7.400z"/></svg>
<div class="t pl" style="right:379px;top:558px">Package</div>
<div class="inp" style="left:1233px;top:549px;width:321px;height:37px"></div><div class="t ps" style="left:1242px;top:558px">Select Package</div><div class="abs" style="left:1531px;top:564px;width:9.4px;height:5.8px;background:#7a8088;clip-path:polygon(0 0,100% 0,50% 100%)"></div>
<div class="t pl" style="right:379px;top:606px">Size</div>
<div class="inp" style="left:1233px;top:598px;width:82px;height:35px"></div><div class="t pv" style="right:308px;top:607px">14</div><svg class="abs" style="left:1299px;top:606px" width="8" height="18" viewBox="0 0 8 18"><path d="M4 0.600 L7.400 5.200 L0.600 5.200 Z M4 17 L7.400 12.200 L0.600 12.200 Z" fill="#7d838c"/></svg>
<div class="t pu" style="left:1322px;top:606px">L</div>
<div class="inp" style="left:1339px;top:598px;width:76px;height:35px"></div><div class="t pv" style="right:208px;top:607px">14</div><svg class="abs" style="left:1400px;top:606px" width="8" height="18" viewBox="0 0 8 18"><path d="M4 0.600 L7.400 5.200 L0.600 5.200 Z M4 17 L7.400 12.200 L0.600 12.200 Z" fill="#7d838c"/></svg>
<div class="t pu" style="left:1423px;top:606px">W</div>
<div class="inp" style="left:1444px;top:598px;width:79px;height:35px"></div><div class="t pv" style="right:100px;top:607px">10</div><svg class="abs" style="left:1508px;top:606px" width="8" height="18" viewBox="0 0 8 18"><path d="M4 0.600 L7.400 5.200 L0.600 5.200 Z M4 17 L7.400 12.200 L0.600 12.200 Z" fill="#7d838c"/></svg>
<div class="t pu" style="left:1531px;top:606px">H</div><div class="t pu" style="left:1550px;top:606px">(cm)</div>
<div class="t pl" style="right:379px;top:653px">Confirmation</div>
<div class="inp" style="left:1233px;top:643px;width:321px;height:37px"></div><div class="abs" style="left:1531px;top:659px;width:9.4px;height:5.8px;background:#7a8088;clip-path:polygon(0 0,100% 0,50% 100%)"></div>
<div class="t pl" style="right:379px;top:702px">Insure for</div>
<div class="abs" style="left:1233px;top:701px;width:15px;height:15px;border:1px solid #767b82;border-radius:2px;background:#fff"></div>
<div class="abs" style="left:1262px;top:692px;width:104px;height:36px;border:1px solid #d5d9de;border-radius:4px;background:#f0f1f3"></div><div class="t ps" style="left:1273px;top:702px">US$</div><div class="abs ps" style="left:1311px;top:701px;width:44px;overflow:hidden;white-space:nowrap;line-height:18px">109.48</div>
</div>
</div>
</body></html>
